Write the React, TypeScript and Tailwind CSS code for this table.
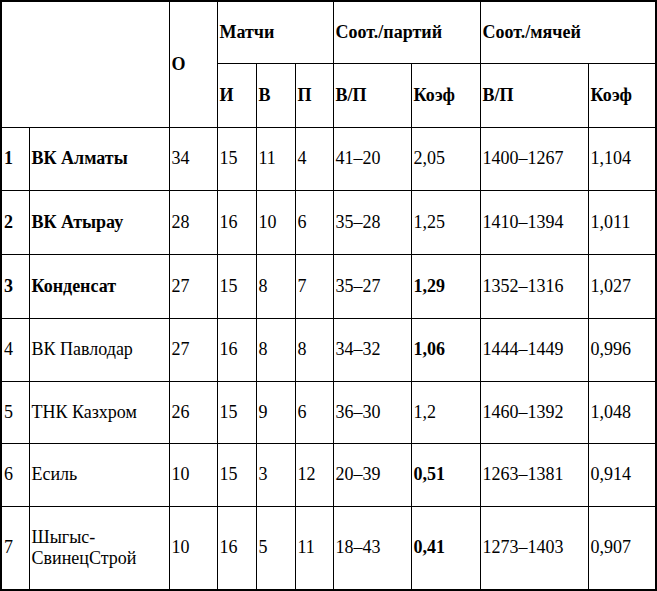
import React from "react";

type Row = {
  n: string;
  team: string;
  o: string;
  i: string;
  w: string;
  l: string;
  sets: string;
  setK: string;
  pts: string;
  ptK: string;
  boldTeam?: boolean;
  boldSetK?: boolean;
  h: string;
};

const rows: Row[] = [
  { n: "1", team: "ВК Алматы", o: "34", i: "15", w: "11", l: "4", sets: "41–20", setK: "2,05", pts: "1400–1267", ptK: "1,104", boldTeam: true, h: "h-[63px]" },
  { n: "2", team: "ВК Атырау", o: "28", i: "16", w: "10", l: "6", sets: "35–28", setK: "1,25", pts: "1410–1394", ptK: "1,011", boldTeam: true, h: "h-[64px]" },
  { n: "3", team: "Конденсат", o: "27", i: "15", w: "8", l: "7", sets: "35–27", setK: "1,29", pts: "1352–1316", ptK: "1,027", boldTeam: true, boldSetK: true, h: "h-[64px]" },
  { n: "4", team: "ВК Павлодар", o: "27", i: "16", w: "8", l: "8", sets: "34–32", setK: "1,06", pts: "1444–1449", ptK: "0,996", boldSetK: true, h: "h-[63px]" },
  { n: "5", team: "ТНК Казхром", o: "26", i: "15", w: "9", l: "6", sets: "36–30", setK: "1,2", pts: "1460–1392", ptK: "1,048", h: "h-[62px]" },
  { n: "6", team: "Есиль", o: "10", i: "15", w: "3", l: "12", sets: "20–39", setK: "0,51", pts: "1263–1381", ptK: "0,914", boldSetK: true, h: "h-[63px]" },
  { n: "7", team: "Шыгыс-СвинецСтрой", o: "10", i: "16", w: "5", l: "11", sets: "18–43", setK: "0,41", pts: "1273–1403", ptK: "0,907", boldSetK: true, h: "h-[83px]" },
];

const cell = "border border-black px-[2px] align-middle text-left";

export default function App() {
  return (
    <div className="w-[657px] h-[591px] bg-white">
      <div className="w-[657px] border-2 border-black text-black">
        <table className="table-fixed border-collapse border-hidden w-[653px] font-['Liberation_Serif','Times_New_Roman',serif] text-[18px] leading-[21px] text-black">
          <colgroup>
            <col className="w-[27px]" />
            <col className="w-[140px]" />
            <col className="w-[48px]" />
            <col className="w-[39px]" />
            <col className="w-[39px]" />
            <col className="w-[38px]" />
            <col className="w-[78px]" />
            <col className="w-[69px]" />
            <col className="w-[108px]" />
            <col className="w-[67px]" />
          </colgroup>
          <thead className="font-bold">
            <tr className="h-[61px]">
              <th rowSpan={2} colSpan={2} className={cell}></th>
              <th rowSpan={2} className={cell}>О</th>
              <th colSpan={3} className={cell}>Матчи</th>
              <th colSpan={2} className={cell}>Соот./партий</th>
              <th colSpan={2} className={cell}>Соот./мячей</th>
            </tr>
            <tr className="h-[64px]">
              <th className={cell}>И</th>
              <th className={cell}>В</th>
              <th className={cell}>П</th>
              <th className={cell}>В/П</th>
              <th className={cell}>Коэф</th>
              <th className={cell}>В/П</th>
              <th className={cell}>Коэф</th>
            </tr>
          </thead>
          <tbody>
            {rows.map((r) => (
              <tr key={r.n} className={r.h}>
                <td className={`${cell} ${r.boldTeam ? "font-bold" : ""}`}>{r.n}</td>
                <td className={`${cell} ${r.boldTeam ? "font-bold" : ""}`}>{r.team}</td>
                <td className={cell}>{r.o}</td>
                <td className={cell}>{r.i}</td>
                <td className={cell}>{r.w}</td>
                <td className={cell}>{r.l}</td>
                <td className={cell}>{r.sets}</td>
                <td className={`${cell} ${r.boldSetK ? "font-bold" : ""}`}>{r.setK}</td>
                <td className={cell}>{r.pts}</td>
                <td className={cell}>{r.ptK}</td>
              </tr>
            ))}
          </tbody>
        </table>
      </div>
    </div>
  );
}
